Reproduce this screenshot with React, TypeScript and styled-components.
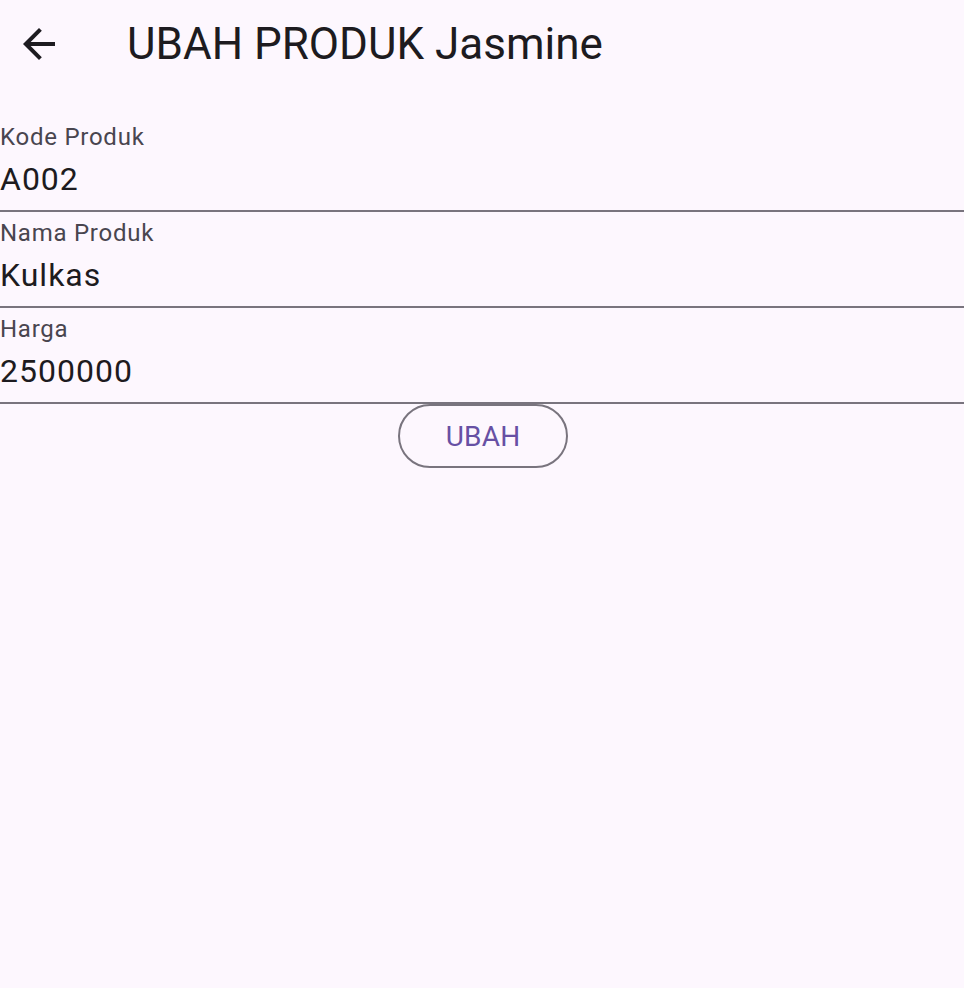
import React from "react";
import styled, { createGlobalStyle } from "styled-components";

const Global = createGlobalStyle`
  html, body { margin: 0; padding: 0; background: #fdf7fe; }
  body { font-family: Roboto, "Noto Sans", sans-serif; color: #1d1b20; }
`;

const Page = styled.div`
  min-height: 988px;
  background: #fdf7fe;
  display: flex;
  flex-direction: column;
`;

const AppBar = styled.header`
  height: 88px;
  display: flex;
  align-items: center;
  padding-left: 15px;
  gap: 64px;
`;

const BackButton = styled.button`
  width: 48px;
  height: 48px;
  padding: 0;
  border: none;
  background: transparent;
  display: flex;
  align-items: center;
  justify-content: center;
  color: #1d1b20;
  cursor: pointer;
`;

const Title = styled.h1`
  margin: 0;
  font-family: Roboto, sans-serif;
  font-size: 44px;
  line-height: 44px;
  font-weight: 400;
  color: #1d1b20;
`;

const Form = styled.form`
  margin-top: 28px;
  display: flex;
  flex-direction: column;
  align-items: stretch;
`;

const Field = styled.label`
  display: flex;
  flex-direction: column;
  padding-top: 9px;
  padding-bottom: 15px;
  border-bottom: 2px solid #79747e;
`;

const FieldLabel = styled.span`
  font-size: 24px;
  line-height: 24px;
  letter-spacing: 0.75px;
  color: #49454f;
`;

const FieldInput = styled.input`
  margin-top: 14px;
  padding: 0;
  border: none;
  outline: none;
  background: transparent;
  font-family: Roboto, sans-serif;
  font-size: 32px;
  line-height: 32px;
  height: 32px;
  letter-spacing: 1px;
  color: #1d1b20;
`;

const SubmitButton = styled.button`
  align-self: center;
  width: 170px;
  height: 64px;
  margin-left: 2px;
  border: 2px solid #79747e;
  border-radius: 32px;
  background: transparent;
  font-family: Roboto, sans-serif;
  font-size: 28px;
  font-weight: 400;
  letter-spacing: 0.2px;
  color: #6750a4;
  cursor: pointer;
`;

const fields = [
  { label: "Kode Produk", value: "A002" },
  { label: "Nama Produk", value: "Kulkas" },
  { label: "Harga", value: "2500000" },
];

export default function App() {
  return (
    <Page>
      <Global />
      <AppBar>
        <BackButton aria-label="Back">
          <svg width="48" height="48" viewBox="0 0 24 24" fill="currentColor">
            <path d="M20 11H7.83l5.59-5.59L12 4l-8 8 8 8 1.41-1.41L7.83 13H20v-2z" />
          </svg>
        </BackButton>
        <Title>UBAH PRODUK Jasmine</Title>
      </AppBar>
      <Form onSubmit={(e) => e.preventDefault()}>
        {fields.map((f) => (
          <Field key={f.label}>
            <FieldLabel>{f.label}</FieldLabel>
            <FieldInput defaultValue={f.value} />
          </Field>
        ))}
        <SubmitButton type="submit">UBAH</SubmitButton>
      </Form>
    </Page>
  );
}
